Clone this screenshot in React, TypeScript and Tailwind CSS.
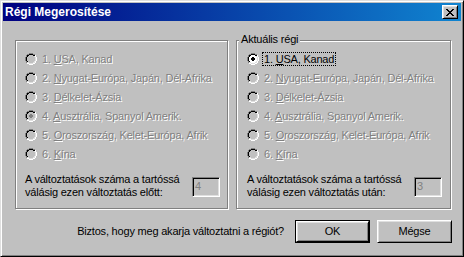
type Region = {
    num: string;
    key: string;
    rest: string;
};

const regions: Region[] = [
    { num: '1. ', key: 'U', rest: 'SA, Kanad' },
    { num: '2. ', key: 'N', rest: 'yugat-Európa, Japán, Dél-Afrika' },
    { num: '3. ', key: 'D', rest: 'élkelet-Ázsia' },
    { num: '4. ', key: 'A', rest: 'usztrália, Spanyol Amerik.' },
    { num: '5. ', key: 'O', rest: 'roszország, Kelet-Európa, Afrik' },
    { num: '6. ', key: 'K', rest: 'ína' },
];

// win98 radio bitmap, 12x12
const radioMap = [
    '....GGGG....',
    '..GGKKKKGG..',
    '.GKKffffKKW.',
    '.GKffffffLW.',
    'GKffffffffLW',
    'GKffffffffLW',
    'GKffffffffLW',
    'GKffffffffLW',
    '.GKffffffLW.',
    '.GLLffffLLW.',
    '..WWLLLLWW..',
    '....WWWW....',
];

const dotMap = ['.XX.', 'XXXX', 'XXXX', '.XX.'];

const closeMap = [
    'XX....XX',
    '.XX..XX.',
    '..XXXX..',
    '...XX...',
    '..XXXX..',
    '.XX..XX.',
    'XX....XX',
];

const disabledText = 'text-[#808080] [text-shadow:1px_1px_0_#fff]';

function Radio({ checked, disabled }: { checked: boolean; disabled: boolean }) {
    const colors: Record<string, string> = {
        G: '#808080',
        K: '#000000',
        W: '#ffffff',
        L: '#dfdfdf',
        f: disabled ? '#c0c0c0' : '#ffffff',
    };
    return (
        <svg width="12" height="12" viewBox="0 0 12 12" shapeRendering="crispEdges" className="shrink-0">
            {radioMap.map((row, y) =>
                row.split('').map((c, x) =>
                    c === '.' ? null : (
                        <rect key={`${x}-${y}`} x={x} y={y} width="1" height="1" fill={colors[c]} />
                    ),
                ),
            )}
            {checked &&
                dotMap.map((row, y) =>
                    row.split('').map((c, x) =>
                        c === 'X' ? (
                            <rect
                                key={`d${x}-${y}`}
                                x={x + 4}
                                y={y + 4}
                                width="1"
                                height="1"
                                fill={disabled ? '#808080' : '#000000'}
                            />
                        ) : null,
                    ),
                )}
        </svg>
    );
}

function CloseButton() {
    return (
        <div className="flex h-[14px] w-[16px] items-center justify-center border border-t-white border-l-white border-r-black border-b-black bg-[#c0c0c0] shadow-[inset_1px_1px_0_#dfdfdf,inset_-1px_-1px_0_#808080]">
            <svg width="8" height="7" viewBox="0 0 8 7" shapeRendering="crispEdges">
                {closeMap.map((row, y) =>
                    row.split('').map((c, x) =>
                        c === 'X' ? <rect key={`${x}-${y}`} x={x} y={y} width="1" height="1" fill="#000" /> : null,
                    ),
                )}
            </svg>
        </div>
    );
}

function RegionGroup({
    label,
    selected,
    focused,
    width,
    padLeft,
    padRight,
    value,
    when,
}: {
    label?: string;
    selected: number;
    focused: number | null;
    width: string;
    padLeft: string;
    padRight: string;
    value: string;
    when: string;
}) {
    return (
        <div
            className={`relative flex h-[169px] flex-col border border-[#808080] pt-[8px] shadow-[inset_1px_1px_0_#fff,1px_1px_0_#fff] ${width} ${padLeft} ${padRight}`}
        >
            {label && (
                <span className="absolute top-[-8px] left-[2px] bg-[#c0c0c0] px-[2px] leading-[13px]">{label}</span>
            )}
            {regions.map((region, index) => {
                const enabled = index === focused;
                return (
                    <div key={region.num} className="flex h-[19px] items-center">
                        <Radio checked={index === selected} disabled={!enabled} />
                        <span
                            className={`ml-[3px] border px-[1px] leading-[12px] whitespace-nowrap ${
                                enabled ? 'border-dotted border-black' : `border-transparent ${disabledText}`
                            }`}
                        >
                            {region.num}
                            <span className="underline underline-offset-[1px]">{region.key}</span>
                            {region.rest}
                        </span>
                    </div>
                );
            })}
            <div className="mt-[10px] flex items-start justify-between">
                <p className="leading-[13px]">
                    A változtatások száma a tartóssá
                    <br />
                    válásig ezen változtatás {when}:
                </p>
                <div className="mt-[4px] h-[20px] w-[28px] border border-t-[#808080] border-l-[#808080] border-r-white border-b-white pt-[2px] pl-[2px] leading-[13px] text-[#808080] shadow-[inset_1px_1px_0_#000,inset_-1px_-1px_0_#dfdfdf]">
                    {value}
                </div>
            </div>
        </div>
    );
}

function Button({ children, isDefault }: { children: string; isDefault?: boolean }) {
    const face =
        'flex flex-1 items-center justify-center border border-t-white border-l-white border-r-black border-b-black shadow-[inset_1px_1px_0_#dfdfdf,inset_-1px_-1px_0_#808080]';
    return (
        <div className={`flex h-[23px] w-[75px] ${isDefault ? 'border border-black' : ''}`}>
            <div className={face}>{children}</div>
        </div>
    );
}

export default function App() {
    return (
        <div className="flex h-[257px] w-[464px] flex-col border border-t-[#dfdfdf] border-l-[#dfdfdf] border-r-black border-b-black bg-[#c0c0c0] p-[2px] font-['Liberation_Sans',Arial,sans-serif] text-[11px] tracking-[-0.2px] text-black shadow-[inset_1px_1px_0_#fff,inset_-1px_-1px_0_#808080]">
            <div className="flex h-[18px] items-center justify-between bg-[linear-gradient(90deg,#000080,#1084d0)] pr-[3px] pl-[2px]">
                <span className="text-[12px] font-bold tracking-normal text-white">Régi Megerosítése</span>
                <CloseButton />
            </div>

            <div className="flex gap-[8px] pt-[19px] pr-[10px] pl-[12px]">
                <RegionGroup
                    selected={3}
                    focused={null}
                    width="w-[213px]"
                    padLeft="pl-[9px]"
                    padRight="pr-[7px]"
                    value="4"
                    when="előtt"
                />
                <RegionGroup
                    label="Aktuális régi"
                    selected={0}
                    focused={0}
                    width="w-[215px]"
                    padLeft="pl-[10px]"
                    padRight="pr-[8px]"
                    value="3"
                    when="után"
                />
            </div>

            <div className="flex items-center justify-end gap-[7px] pt-[11px] pr-[9px]">
                <span className="mr-[4px]">Biztos, hogy meg akarja változtatni a régiót?</span>
                <Button isDefault>OK</Button>
                <Button>Mégse</Button>
            </div>
        </div>
    );
}
